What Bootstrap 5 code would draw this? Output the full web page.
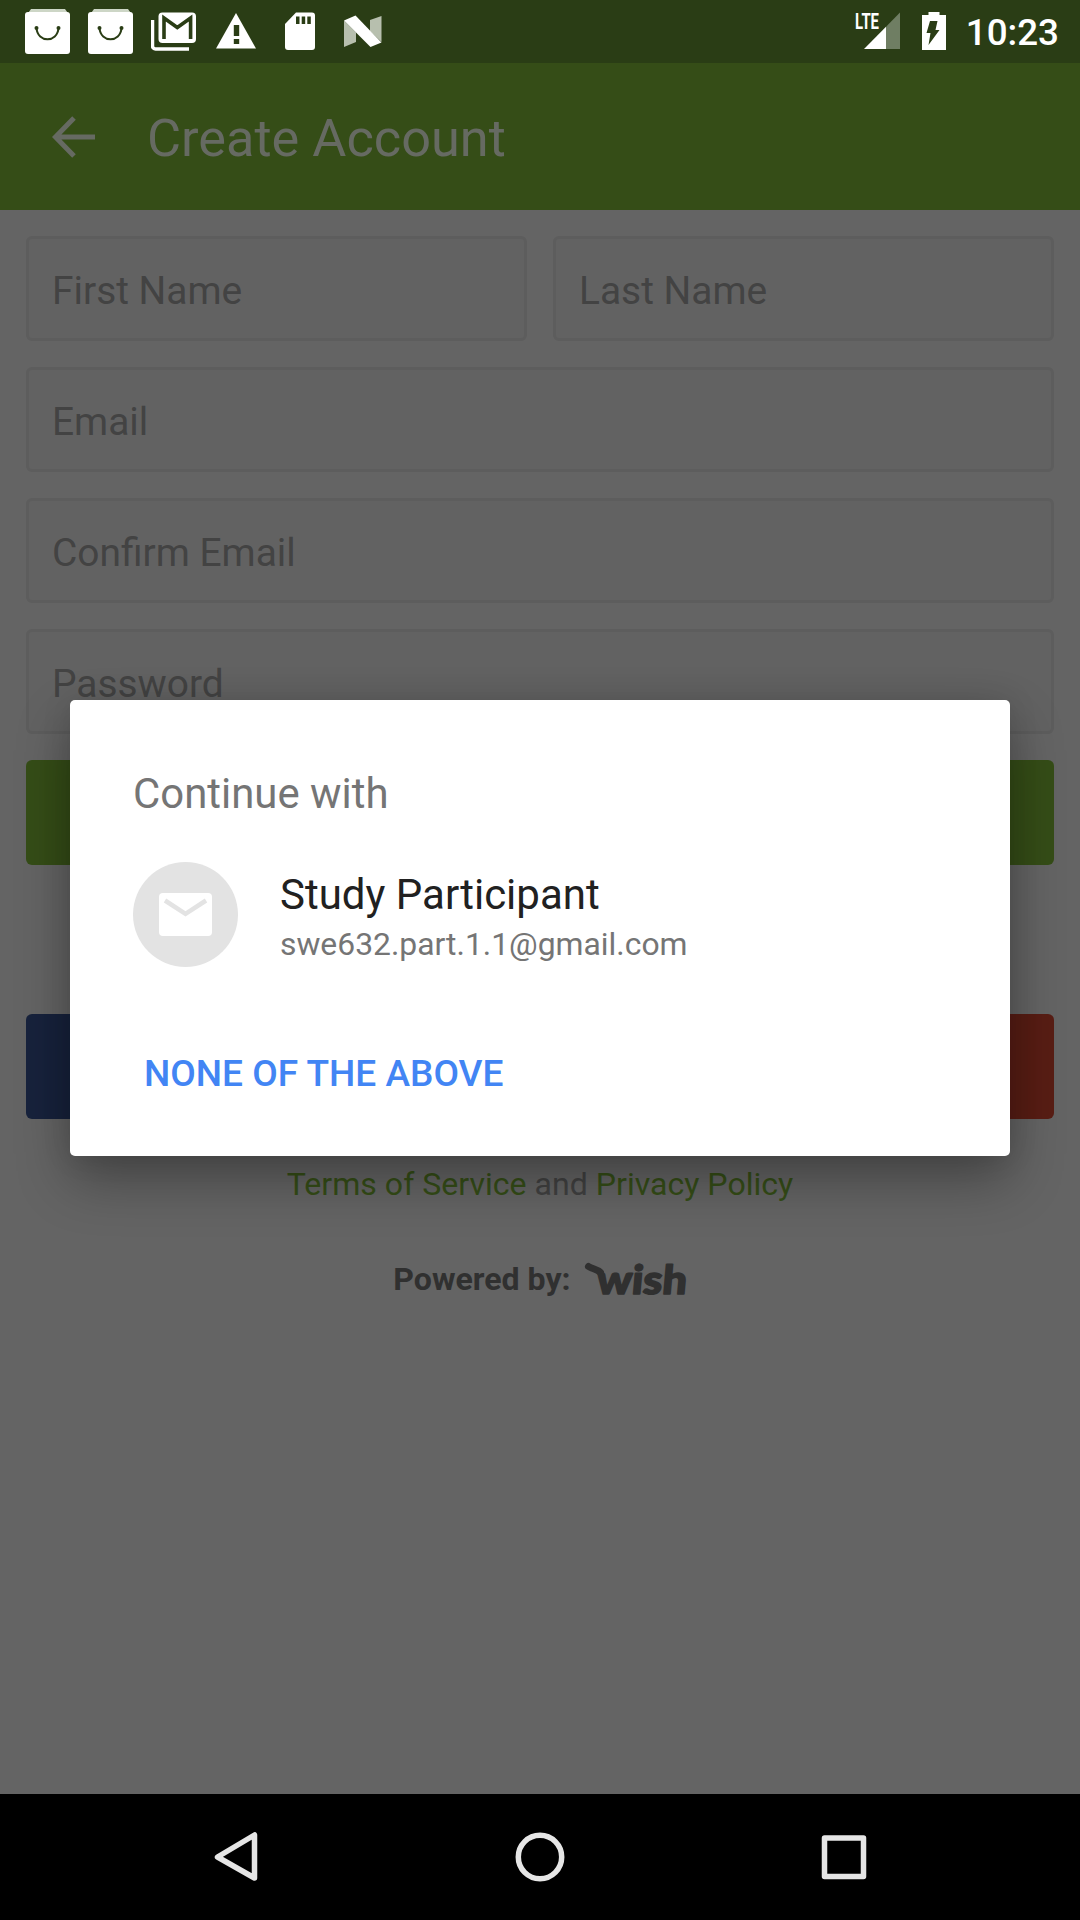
<!DOCTYPE html>
<html lang="en">
<head>
<meta charset="utf-8">
<meta name="viewport" content="width=device-width, initial-scale=1">
<title>Create Account</title>
<link href="https://cdn.jsdelivr.net/npm/bootstrap@5.3.0/dist/css/bootstrap.min.css" rel="stylesheet">
<style>
body{font-family:Roboto,"Liberation Sans",sans-serif;background:#646464}
svg{display:block;flex:none}
.screen{width:1080px;height:1920px;background:#646464}
.statusbar{height:63px;background:#2a3d15;padding:0 21px 0 25px;color:#fff}
.clock{font-size:36.75px;font-weight:500;line-height:1;padding-top:4px}
.appbar{height:147px;background:#354d17;padding:0 52px;gap:52px;color:#666a62}
.app-title{font-size:52.3px;line-height:1;padding-top:3px}
.form-area{padding:26px}
.form-area .stack,.names{gap:26px}
.field{height:105px;background:#626262;border:3px solid #5d5d5d;border-radius:6px;padding:4px 23px 0;font-size:38.9px;line-height:1}
.field::placeholder{color:#434343;opacity:1}
.form-area .btn{height:105px;border:0;border-radius:6px}
.btn-create{background:#354d17}
.btn-fb{background:#17223c}
.btn-gp{background:#581d14}
.social{margin-top:149px;gap:26px}
.legal{font-size:32.1px;line-height:37px;margin-top:47px;color:#414141}
.legal a{color:#354d17;text-decoration:none}
.powered{height:37px;font-size:32.1px;line-height:37px;font-weight:700;color:#303030;margin-top:58px;gap:13px}
.wordmark{font:900 40px Lato,sans-serif}
.dialog-box{position:absolute;left:70px;top:700px;width:940px;height:456px;background:#fff;border-radius:5px;padding:69px 63px 0;box-shadow:0 24px 54px rgba(0,0,0,.32),0 0 30px rgba(0,0,0,.1)}
.dlg-title{font-size:41.9px;line-height:49px;color:#757575}
.account{gap:42px;margin-top:44px;height:106px}
.acc-name{font-size:42px;line-height:49px;color:#212121;margin-top:8px}
.acc-mail{font-size:31.85px;line-height:37px;color:#757575;margin-top:7px}
.none-btn{font-size:37.05px;line-height:43px;font-weight:500;color:#4285f4;margin:84px 0 0 11px;padding:0;border:0}
.softkeys{height:126px;background:#000}
</style>
<script src="https://cdn.jsdelivr.net/npm/bootstrap@5.3.0/dist/js/bootstrap.bundle.min.js"></script>
</head>
<body>
<div class="screen d-flex flex-column position-relative overflow-hidden">
  <header class="statusbar d-flex align-items-center justify-content-between">
    <div class="d-flex">
      <svg width="63" height="63" viewBox="25 0 63 63"><path d="M31 9h34l5 7H26z" fill="#cdd6c6"/><rect x="25" y="12" width="45" height="42" rx="3" fill="#fff"/><path d="M36.500 28c1 15 21 15 22 0" fill="none" stroke="#2a3d15" stroke-width="2"/><circle cx="36.500" cy="28" r="2" fill="#2a3d15"/><circle cx="58.500" cy="28" r="2" fill="#2a3d15"/></svg>
      <svg width="63" height="63" viewBox="25 0 63 63"><path d="M31 9h34l5 7H26z" fill="#cdd6c6"/><rect x="25" y="12" width="45" height="42" rx="3" fill="#fff"/><path d="M36.500 28c1 15 21 15 22 0" fill="none" stroke="#2a3d15" stroke-width="2"/><circle cx="36.500" cy="28" r="2" fill="#2a3d15"/><circle cx="58.500" cy="28" r="2" fill="#2a3d15"/></svg>
      <svg width="65" height="63" viewBox="151 0 65 63"><path d="M152.500 20v26a3 3 0 0 0 3 3H189" fill="none" stroke="#fff" stroke-width="3.500"/><rect x="158.500" y="12.500" width="37.500" height="30.500" rx="4" fill="#fff"/><path d="M164 39V18l13.300 9.500L190.600 18v21" fill="none" stroke="#2a3d15" stroke-width="3.600"/></svg>
      <svg width="68" height="63" viewBox="216 0 68 63"><path d="M236 13l20 35.500h-40z" fill="#fff"/><path d="M233.800 25h5.400v11h-5.400zM233.800 39h5.400v5h-5.400z" fill="#2a3d15"/></svg>
      <svg width="59" height="63" viewBox="284 0 59 63"><path d="M296 12.500h16a3 3 0 0 1 3 3V47a3 3 0 0 1-3 3h-24a3 3 0 0 1-3-3V24z" fill="#fff"/><path d="M296 16.500h3.500V24H296zM301.700 16.500h3.500V24h-3.500zM307.300 16.500h3.500V24h-3.500z" fill="#2a3d15"/></svg>
      <svg width="40" height="63" viewBox="343 0 40 63"><path d="M344 20.500l12 12V42l-12 5zM381.500 16v26L370 31V20z" fill="#b7bfae"/><path d="M344 20.500l11.500-5 26 27-11 4.500z" fill="#fff"/></svg>
    </div>
    <div class="d-flex align-items-center">
      <svg width="67" height="63" viewBox="855 0 67 63"><path d="M900 12.500V49h-14V26.700z" fill="#6f7e63"/><path d="M864 49h22V26.700z" fill="#fff"/><text x="855" y="29" font-family="Roboto" font-weight="700" font-size="22" textLength="24" lengthAdjust="spacingAndGlyphs" fill="#fff">LTE</text></svg>
      <svg width="44" height="63" viewBox="922 0 44 63"><path d="M928.500 12h11v3h6.500v35h-24V15h6.500z" fill="#fff"/><path d="M930 21h7.500l-2 9h4L928.500 45l2-12h-4z" fill="#2a3d15"/></svg>
      <span class="clock">10:23</span>
    </div>
  </header>
  <div class="appbar d-flex align-items-center">
    <svg width="43" height="42" viewBox="0 0 43 42"><path d="M43 21H4M22 2L3.500 21 22 40" fill="none" stroke="currentColor" stroke-width="5"/></svg>
    <h1 class="app-title fw-normal m-0">Create Account</h1>
  </div>
  <main class="form-area flex-grow-1">
    <form class="stack d-flex flex-column">
      <div class="names d-flex">
        <input class="form-control field" placeholder="First Name">
        <input class="form-control field" placeholder="Last Name">
      </div>
      <input class="form-control field" placeholder="Email">
      <input class="form-control field" placeholder="Confirm Email">
      <input class="form-control field" placeholder="Password">
      <button type="button" class="btn btn-create w-100" aria-label="Create"></button>
    </form>
    <div class="social d-flex">
      <button type="button" class="btn btn-fb flex-fill" aria-label="Facebook"></button>
      <button type="button" class="btn btn-gp flex-fill" aria-label="Google"></button>
    </div>
    <p class="legal text-center mb-0"><a href="#">Terms of Service</a> and <a href="#">Privacy Policy</a></p>
    <div class="powered d-flex justify-content-center align-items-center"><span>Powered by:</span>
      <svg width="103" height="66" viewBox="0 -14 103 66"><path d="M4.500 5.500C8 8 13 8 16.500 11.500" fill="none" stroke="#303030" stroke-width="7" stroke-linecap="round"/><text class="wordmark" transform="translate(12 33) skewX(-5)" x="0" y="0" fill="#303030" stroke="#303030" stroke-width="1.600" stroke-linejoin="round" textLength="90" lengthAdjust="spacingAndGlyphs">wish</text></svg>
    </div>
  </main>
  <nav class="softkeys">
    <svg width="1080" height="126" viewBox="0 1794 1080 126"><g fill="none" stroke="#e6e6e6" stroke-width="5.500" stroke-linejoin="round"><path d="M254.500 1835v43L217.500 1857z"/><circle cx="540" cy="1857" r="21.700"/><rect x="824.500" y="1838" width="39" height="38.500"/></g></svg>
  </nav>
  <section class="dialog-box" role="dialog">
    <div class="dlg-title">Continue with</div>
    <div class="account d-flex align-items-start">
      <svg width="105" height="105" viewBox="0 0 105 105"><circle cx="52.500" cy="52.500" r="52.500" fill="#e3e3e3"/><rect x="26" y="31" width="53" height="43" rx="4" fill="#fff"/><path d="M32 38.500l20.500 13.300L73 38.500" fill="none" stroke="#e3e3e3" stroke-width="4.500"/></svg>
      <div><div class="acc-name">Study Participant</div><div class="acc-mail">swe632.part.1.1@gmail.com</div></div>
    </div>
    <button type="button" class="btn none-btn">NONE OF THE ABOVE</button>
  </section>
</div>
</body>
</html>
